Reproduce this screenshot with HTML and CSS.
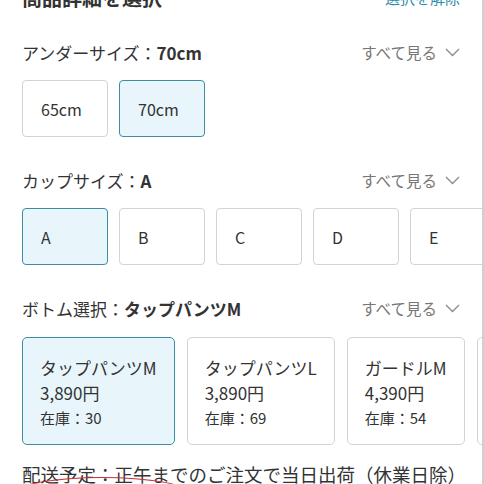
FILE: index.html
```html
<!DOCTYPE html>
<html lang="ja">
<head>
<meta charset="utf-8">
<link rel="stylesheet" href="styles.css">
</head>
<body>
<div class="page">
  <div class="header">
    <span class="title">商品詳細を選択</span>
    <a class="clear">選択を解除</a>
  </div>

  <div class="section s1">
    <div class="label-row">
      <span class="label">アンダーサイズ：<b>70cm</b></span>
      <span class="more">すべて見る<svg class="chev" width="15" height="9" viewBox="0 0 15 9"><polyline points="1,1 7.5,7.5 14,1" fill="none" stroke="#8a8a8a" stroke-width="1.3"/></svg></span>
    </div>
    <div class="opts">
      <div class="opt">65cm</div>
      <div class="opt sel">70cm</div>
    </div>
  </div>

  <div class="section">
    <div class="label-row">
      <span class="label">カップサイズ：<b>A</b></span>
      <span class="more">すべて見る<svg class="chev" width="15" height="9" viewBox="0 0 15 9"><polyline points="1,1 7.5,7.5 14,1" fill="none" stroke="#8a8a8a" stroke-width="1.3"/></svg></span>
    </div>
    <div class="opts">
      <div class="opt sel">A</div>
      <div class="opt">B</div>
      <div class="opt">C</div>
      <div class="opt">D</div>
      <div class="opt">E</div>
    </div>
  </div>

  <div class="section">
    <div class="label-row">
      <span class="label">ボトム選択：<b>タップパンツM</b></span>
      <span class="more">すべて見る<svg class="chev" width="15" height="9" viewBox="0 0 15 9"><polyline points="1,1 7.5,7.5 14,1" fill="none" stroke="#8a8a8a" stroke-width="1.3"/></svg></span>
    </div>
    <div class="cards">
      <div class="card sel">
        <div class="name">タップパンツM</div>
        <div class="price">3,890円</div>
        <div class="stock">在庫：30</div>
      </div>
      <div class="card">
        <div class="name">タップパンツL</div>
        <div class="price">3,890円</div>
        <div class="stock">在庫：69</div>
      </div>
      <div class="card">
        <div class="name">ガードルM</div>
        <div class="price">4,390円</div>
        <div class="stock">在庫：54</div>
      </div>
      <div class="card">
        <div class="name">ガードルL</div>
        <div class="price">4,390円</div>
        <div class="stock">在庫：40</div>
      </div>
    </div>
  </div>

  <div class="delivery">配送予定：正午までのご注文で当日出荷（休業日除）</div>
  <div class="oval"></div>
</div>
</body>
</html>
```

FILE: styles.css
```css
html, body {
  margin: 0;
  padding: 0;
  background: #fff;
}
body {
  font-family: "Noto Sans CJK JP", "Noto Sans", sans-serif;
  color: #333;
}
.page {
  position: relative;
  width: 484px;
  height: 484px;
  box-sizing: border-box;
  padding: 0 22px;
  border-right: 2px solid #cfcfcf;
  overflow: hidden;
}
.header {
  display: flex;
  justify-content: space-between;
  align-items: center;
  height: 28px;
  margin-top: -17px;
}
.title {
  font-size: 20px;
  font-weight: 700;
  color: #333;
}
.clear {
  font-size: 15px;
  color: #2b8cab;
}
.section {
  margin-top: 31px;
}
.section.s1 {
  margin-top: 29px;
}
.label-row {
  display: flex;
  justify-content: space-between;
  align-items: center;
  height: 24px;
}
.label {
  font-size: 17px;
  color: #333;
}
.label b {
  font-weight: 700;
}
.more {
  display: flex;
  align-items: center;
  font-size: 15.5px;
  color: #777;
}
.chev {
  margin-left: 8px;
}
.opts {
  display: flex;
  gap: 11px;
  margin-top: 16px;
}
.opt {
  flex: 0 0 auto;
  box-sizing: border-box;
  width: 86px;
  height: 57px;
  border: 1px solid #d3d3d3;
  border-radius: 4px;
  padding-left: 18px;
  display: flex;
  align-items: center;
  font-size: 16px;
  color: #333;
  background: #fff;
}
.opt.sel, .card.sel {
  background: #e8f6fc;
  border-color: #3d8ea3;
  border-width: 1.5px;
}
.cards {
  display: flex;
  gap: 12px;
  margin-top: 17px;
}
.card {
  flex: 0 0 auto;
  box-sizing: border-box;
  height: 108px;
  border: 1px solid #d3d3d3;
  border-radius: 5px;
  padding: 17px 17px 0 17px;
  background: #fff;
}
.name {
  font-size: 17px;
  line-height: 25px;
  color: #333;
}
.price {
  font-size: 17px;
  line-height: 25px;
  color: #333;
}
.stock {
  font-size: 15px;
  line-height: 25px;
  color: #333;
}
.delivery {
  margin-top: 16px;
  font-size: 18.5px;
  line-height: 26px;
  color: #333;
  white-space: nowrap;
}
.oval {
  position: absolute;
  left: 15px;
  top: 477px;
  width: 172px;
  height: 30px;
  border: 1.5px solid #c4303a;
  border-radius: 50%;
}
```
